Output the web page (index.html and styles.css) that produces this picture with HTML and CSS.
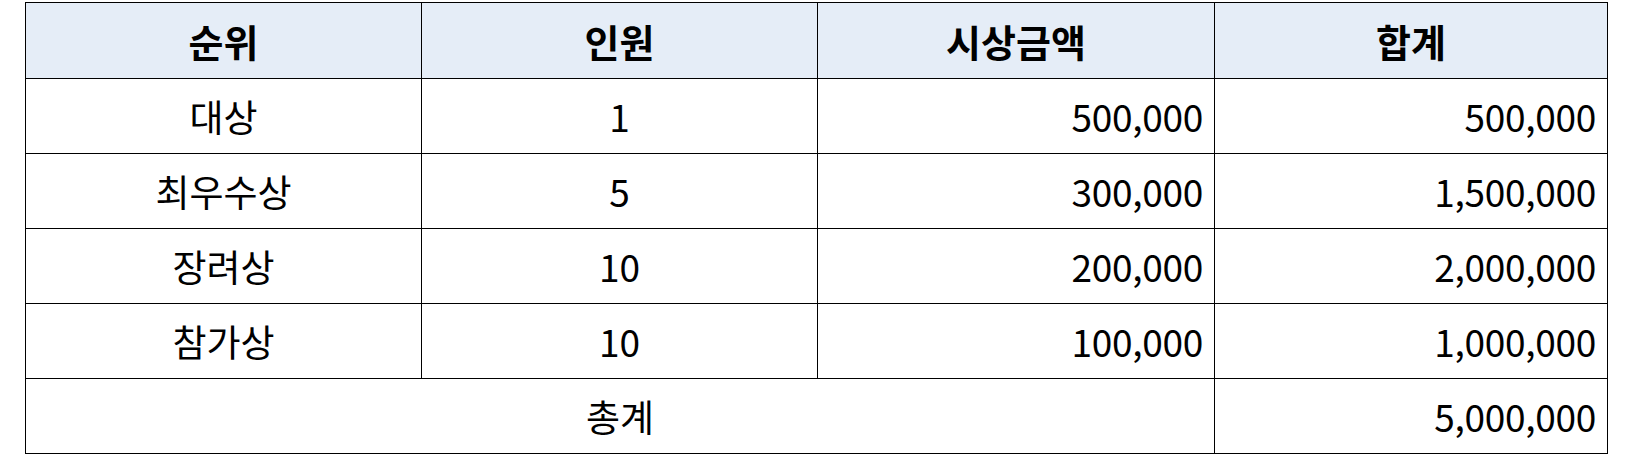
FILE: index.html
```html
<!DOCTYPE html>
<html lang="ko">
<head>
<meta charset="utf-8">
<title>시상 내역</title>
<link rel="stylesheet" href="styles.css">
</head>
<body>
<table class="prize-table">
  <colgroup>
    <col class="c1"><col class="c2"><col class="c3"><col class="c4">
  </colgroup>
  <thead>
    <tr>
      <th>순위</th>
      <th>인원</th>
      <th>시상금액</th>
      <th>합계</th>
    </tr>
  </thead>
  <tbody>
    <tr><td class="center">대상</td><td class="center">1</td><td class="num">500,000</td><td class="num">500,000</td></tr>
    <tr><td class="center">최우수상</td><td class="center">5</td><td class="num">300,000</td><td class="num">1,500,000</td></tr>
    <tr><td class="center">장려상</td><td class="center">10</td><td class="num">200,000</td><td class="num">2,000,000</td></tr>
    <tr><td class="center">참가상</td><td class="center">10</td><td class="num">100,000</td><td class="num">1,000,000</td></tr>
    <tr><td class="center" colspan="3">총계</td><td class="num">5,000,000</td></tr>
  </tbody>
</table>
</body>
</html>
```

FILE: styles.css
```css
html, body {
  margin: 0;
  padding: 0;
  background: #ffffff;
}

body {
  padding: 2px 0 0 25px;
  font-family: "Noto Sans CJK KR", "Noto Sans", sans-serif;
  color: #000000;
}

.prize-table {
  border-collapse: collapse;
  table-layout: fixed;
  width: 1582px;
}

.c1 { width: 396px; }
.c2 { width: 396px; }
.c3 { width: 397px; }
.c4 { width: 393px; }

.prize-table th,
.prize-table td {
  border: 1.5px solid #000000;
  height: 75px;
  box-sizing: border-box;
  padding: 0 11px;
  font-size: 37px;
  line-height: 1;
  vertical-align: middle;
}

.prize-table th {
  background: #e5edf7;
  font-weight: 700;
  font-size: 38px;
  text-align: center;
  height: 76px;
}

.center {
  text-align: center;
  font-weight: 400;
}

.num {
  text-align: right;
  font-weight: 400;
  letter-spacing: -0.3px;
}
```
